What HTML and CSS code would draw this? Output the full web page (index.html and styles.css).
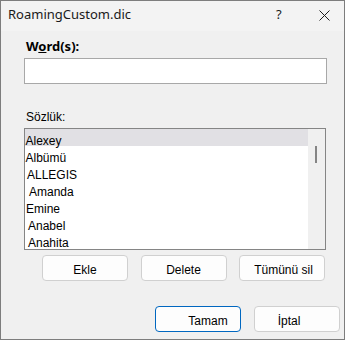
FILE: index.html
```html
<!DOCTYPE html>
<html lang="tr">
<head>
<meta charset="utf-8">
<title>RoamingCustom.dic</title>
<link rel="stylesheet" href="styles.css">
</head>
<body>
<div class="window">
  <div class="titlebar">
    <span class="title">RoamingCustom.dic</span>
    <span class="help">?</span>
    <span class="close">
      <svg width="11" height="11" viewBox="0 0 11 11"><path d="M0.5 0.5 L10.5 10.5 M10.5 0.5 L0.5 10.5" stroke="#1f1f1f" stroke-width="1" fill="none"/></svg>
    </span>
  </div>
  <div class="content">
    <div class="word-label">W<span class="acc">o</span>rd(s):</div>
    <div class="input"></div>
    <div class="dict-label">Sözlük:</div>
    <div class="list">
      <div class="items">
        <div class="item sel off0">Alexey</div>
        <div class="item off0">Albümü</div>
        <div class="item off2">ALLEGIS</div>
        <div class="item off4">Amanda</div>
        <div class="item off1">Emine</div>
        <div class="item off3">Anabel</div>
        <div class="item off3">Anahita</div>
      </div>
      <div class="scroll"><div class="thumb"></div></div>
    </div>
    <div class="row">
      <div class="btn">Ekle</div>
      <div class="btn">Delete</div>
      <div class="btn shift-r">Tümünü sil</div>
    </div>
    <div class="row bottom">
      <div class="btn primary">Tamam</div>
      <div class="btn cancel">İptal</div>
    </div>
  </div>
</div>
</body>
</html>
```
FILE: styles.css
```css
html, body {
  margin: 0;
  padding: 0;
  background: #f0f0f0;
}
.window {
  width: 345px;
  height: 340px;
  box-sizing: border-box;
  border: 1px solid #7d7d7d;
  background: #f0f0f0;
  overflow: hidden;
}
.titlebar {
  height: 30px;
  background: #f3f3f3;
  display: flex;
  align-items: flex-start;
  font-family: "Noto Sans", "Open Sans", sans-serif;
  font-size: 13px;
  line-height: 27px;
  color: #1a1a1a;
}
.title {
  padding-left: 7px;
  flex: 1;
}
.help {
  width: 6px;
  margin-right: 37px;
}
.close {
  width: 11px;
  height: 11px;
  margin-top: 9px;
  margin-right: 14px;
  display: flex;
}
.content {
  padding: 0 0 0 23px;
  font-family: "Liberation Sans", Arial, sans-serif;
  font-size: 12px;
  color: #000;
}
.word-label {
  margin-top: 6px;
  padding-left: 2px;
  font-family: "Noto Sans", "Open Sans", sans-serif;
  font-weight: bold;
  font-size: 13px;
  line-height: 18px;
  color: #000;
}
.acc {
  text-decoration: underline;
  text-underline-offset: 1px;
}
.input {
  margin-top: 3px;
  width: 303px;
  height: 26px;
  box-sizing: border-box;
  border: 1px solid #a8a8a8;
  background: #fff;
}
.dict-label {
  margin-top: 26px;
  padding-left: 2px;
  line-height: 14px;
}
.list {
  margin-top: 4px;
  width: 302px;
  height: 122px;
  box-sizing: border-box;
  border: 1px solid #858585;
  background: #fff;
  display: flex;
  overflow: hidden;
}
.items {
  flex: 1;
  overflow: hidden;
}
.item {
  height: 17px;
  line-height: 24px;
  white-space: nowrap;
  overflow: visible;
}
.sel {
  background: #e1e0e4;
}
.off0 { padding-left: 0.5px; }
.off1 { padding-left: 1px; }
.off2 { padding-left: 2px; }
.off3 { padding-left: 3px; }
.off4 { padding-left: 4px; }
.scroll {
  width: 17px;
  background: #f0f0f0;
}
.thumb {
  margin-left: 7px;
  margin-top: 17px;
  width: 2px;
  height: 17px;
  background: #858585;
}
.row {
  margin-top: 5px;
  margin-left: 18px;
  display: flex;
  gap: 12.5px;
}
.row.bottom {
  margin-top: 25px;
  margin-left: 131px;
  gap: 13px;
}
.btn {
  width: 86px;
  height: 26px;
  box-sizing: border-box;
  border: 1px solid #d0d0d0;
  border-radius: 4px;
  background: #fdfdfd;
  text-align: center;
  padding-top: 3px;
  line-height: 22px;
  color: #000;
}
.shift-r { padding-left: 3px; }
.primary {
  border-color: #0067c0;
  padding-left: 20px;
}
.cancel {
  padding-right: 16px;
}
```
